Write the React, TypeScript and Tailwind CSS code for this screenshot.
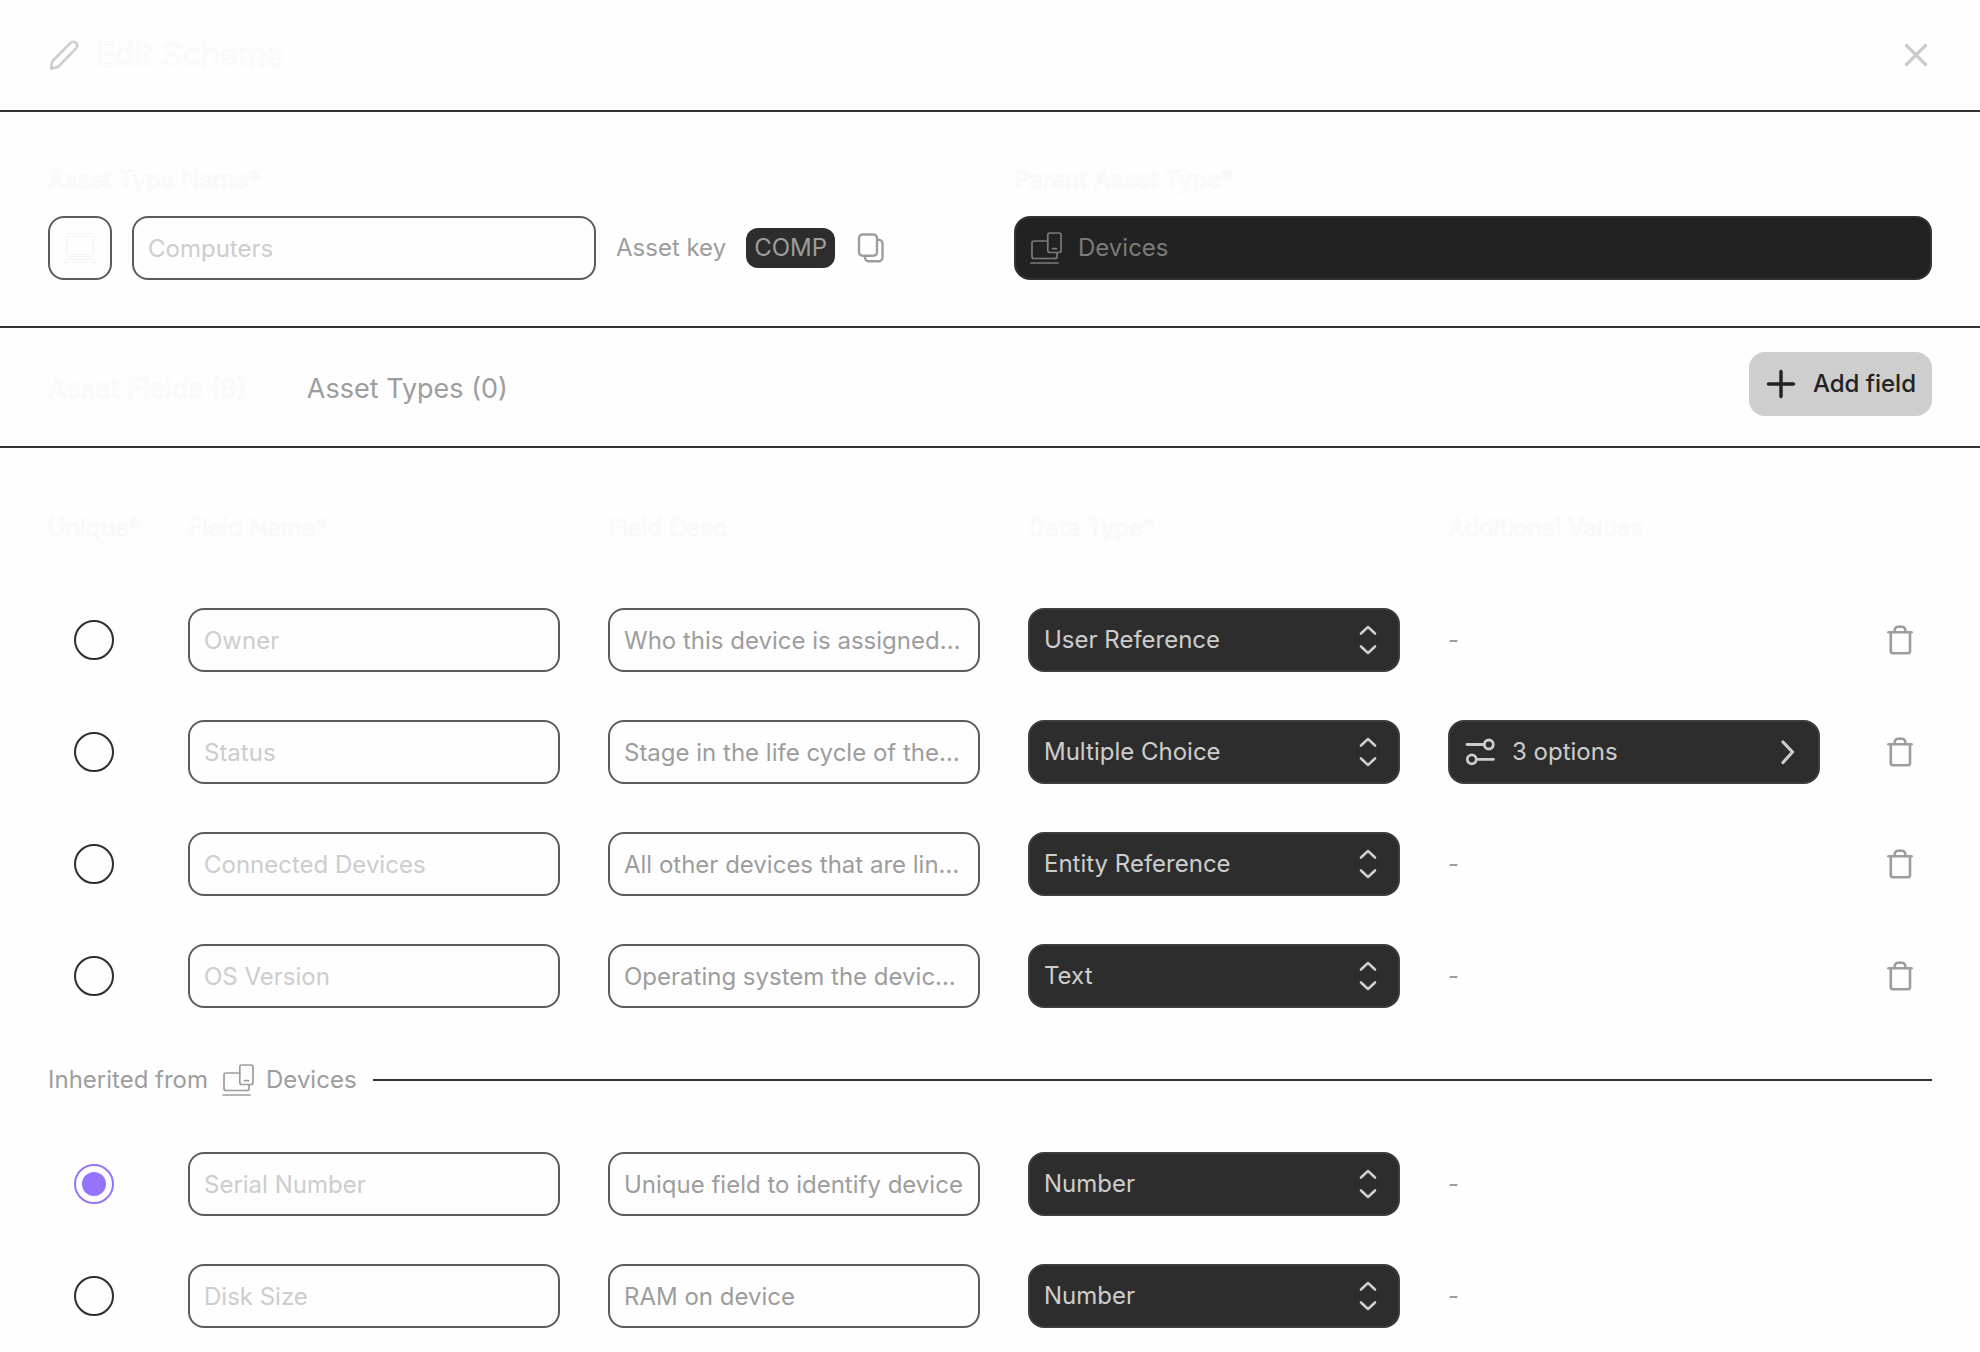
import React from 'react';

type Field = {
  name: string;
  desc: string;
  type: string;
  options?: number;
  unique?: boolean;
};

const ownFields: Field[] = [
  { name: 'Owner', desc: 'Who this device is assigned…', type: 'User Reference' },
  { name: 'Status', desc: 'Stage in the life cycle of the…', type: 'Multiple Choice', options: 3 },
  { name: 'Connected Devices', desc: 'All other devices that are lin…', type: 'Entity Reference' },
  { name: 'OS Version', desc: 'Operating system the devic…', type: 'Text' },
];

const inheritedFields: Field[] = [
  { name: 'Serial Number', desc: 'Unique field to identify device', type: 'Number', unique: true },
  { name: 'Disk Size', desc: 'RAM on device', type: 'Number' },
];

const dataTypes = ['User Reference', 'Multiple Choice', 'Entity Reference', 'Text', 'Number'];

const ghost = 'text-[#fefefe] [-webkit-text-stroke:1px_#f8f8f8]';
const rowGrid = 'grid grid-cols-[92px_repeat(4,minmax(0,1fr))_64px] items-center gap-12 px-12';
const inputBox =
  'h-16 w-full min-w-0 rounded-2xl border-2 border-[#5b5b5b] bg-transparent px-3.5 text-[24px] outline-none';

function PencilIcon() {
  return (
    <svg width="32" height="32" viewBox="0 0 32 32" fill="none" stroke="#cdcdcd" strokeWidth="2.6" strokeLinejoin="round" aria-hidden="true">
      <path d="M3 29.500 L4.200 22.500 L22.800 3.700 a3.900 3.900 0 0 1 5.500 5.500 L10 28 Z" />
      <path d="M2.500 30 L3.200 26 L6.500 29.300 Z" fill="#cdcdcd" strokeWidth="1" />
    </svg>
  );
}

function CloseIcon() {
  return (
    <svg width="32" height="32" viewBox="0 0 32 32" fill="none" stroke="#cdcdcd" strokeWidth="3.4" strokeLinecap="round" aria-hidden="true">
      <path d="M6.500 6.500 L25.500 25.500 M25.500 6.500 L6.500 25.500" />
    </svg>
  );
}

function ComputerIcon() {
  return (
    <svg width="32" height="32" viewBox="0 0 32 32" fill="none" stroke="#f4f4f4" strokeWidth="1" aria-hidden="true">
      <rect x="1.500" y="1.500" width="29" height="23" rx="3.500" />
      <rect x="3.500" y="4.500" width="25" height="18" rx="2" />
      <path d="M0 27.500 H32 M0 30.500 H32" />
    </svg>
  );
}

function CopyIcon() {
  return (
    <svg width="32" height="32" viewBox="0 0 32 32" fill="none" stroke="#9d9d9d" strokeWidth="2.4" aria-hidden="true">
      <rect x="4" y="2.500" width="18" height="21.200" rx="3.500" />
      <path d="M22 7.800 h1.500 a4 4 0 0 1 4 4 V25.200 a4 4 0 0 1 -4 4 H14 a4 4 0 0 1 -4 -4 V24" />
    </svg>
  );
}

function DevicesIcon({ color }: { color: string }) {
  return (
    <svg className="shrink-0" width="32" height="32" viewBox="0 0 32 32" fill="none" stroke={color} strokeWidth="1.700" strokeLinecap="round" aria-hidden="true">
      <path d="M17.500 9 H4 a2 2 0 0 0 -2 2 V24.500 a2 2 0 0 0 2 2 H25 a2 2 0 0 0 2 -2 V21" />
      <rect x="17.800" y="1" width="13.200" height="19.500" rx="2" />
      <path d="M22.500 16.700 H26.500 M1 31 H28" />
    </svg>
  );
}

function PlusIcon() {
  return (
    <svg width="32" height="32" viewBox="0 0 32 32" fill="none" stroke="#222222" strokeWidth="3.400" strokeLinecap="round" aria-hidden="true">
      <path d="M16 3.500 V28.500 M3.500 16 H28.500" />
    </svg>
  );
}

function UpDownIcon() {
  return (
    <svg className="pointer-events-none absolute top-4 right-4" width="32" height="32" viewBox="0 0 32 32" fill="none" stroke="#cdcdcd" strokeWidth="2.600" strokeLinecap="round" strokeLinejoin="round" aria-hidden="true">
      <path d="M9 9.500 L16 3 L23 9.500 M9 22.500 L16 29 L23 22.500" />
    </svg>
  );
}

function SlidersIcon() {
  return (
    <svg width="32" height="32" viewBox="0 0 32 32" fill="none" stroke="#cdcdcd" strokeWidth="2.800" strokeLinecap="round" aria-hidden="true">
      <path d="M3 8.500 H20 M14 23.300 H29.500" />
      <circle cx="24.800" cy="8.500" r="4.500" />
      <circle cx="7.800" cy="23.300" r="4.500" />
    </svg>
  );
}

function ChevronRightIcon() {
  return (
    <svg width="32" height="32" viewBox="0 0 32 32" fill="none" stroke="#cdcdcd" strokeWidth="3.200" strokeLinecap="round" strokeLinejoin="round" aria-hidden="true">
      <path d="M11 6 L20.500 16 L11 26.500" />
    </svg>
  );
}

function TrashIcon() {
  return (
    <svg width="32" height="32" viewBox="0 0 32 32" fill="none" stroke="#9d9d9d" strokeWidth="2.600" strokeLinecap="round" aria-hidden="true">
      <path d="M4.500 8.300 H27.500" />
      <path d="M10.700 8 V6 a3.300 3.300 0 0 1 3.300 -3.300 h4 a3.300 3.300 0 0 1 3.300 3.300 V8" />
      <path d="M6.800 8.500 V27 a2.200 2.200 0 0 0 2.200 2.200 H23.800 a2.200 2.200 0 0 0 2.200 -2.200 V8.500" />
    </svg>
  );
}

function FieldRow({ field, removable }: { field: Field; removable?: boolean }) {
  return (
    <tr className={`${rowGrid} py-6`}>
      <td className="flex justify-center">
        <input
          type="radio"
          name="unique"
          aria-label={`${field.name} is unique`}
          defaultChecked={field.unique}
          className="size-10 appearance-none rounded-full border-2 border-[#2d2d2d] checked:border-[#9673ff] checked:bg-[#9673ff] checked:bg-clip-content checked:p-1.5"
        />
      </td>
      <td>
        <input aria-label="Field Name" defaultValue={field.name} className={`${inputBox} text-[#cdcdcd]`} />
      </td>
      <td>
        <input aria-label="Field Desc" defaultValue={field.desc} className={`${inputBox} text-[#9d9d9d]`} />
      </td>
      <td className="relative">
        <select
          aria-label="Data Type"
          defaultValue={field.type}
          className="block h-16 w-full appearance-none rounded-2xl border-2 border-[#3f3f3f] bg-[#2d2d2d] pr-14 pl-3.5 text-[24px] text-[#cdcdcd]"
        >
          {dataTypes.map((t) => (
            <option key={t}>{t}</option>
          ))}
        </select>
        <UpDownIcon />
      </td>
      <td className="text-[24px] text-[#9d9d9d]">
        {field.options ? (
          <button
            type="button"
            className="flex h-16 w-full items-center gap-4 rounded-2xl border-2 border-[#3f3f3f] bg-[#2d2d2d] px-3.5 text-left text-[#cdcdcd]"
          >
            <SlidersIcon />
            <span className="flex-1">{field.options} options</span>
            <ChevronRightIcon />
          </button>
        ) : (
          '-'
        )}
      </td>
      <td className="flex justify-center">
        {removable && (
          <button type="button" aria-label={`Delete ${field.name}`}>
            <TrashIcon />
          </button>
        )}
      </td>
    </tr>
  );
}

export default function App() {
  return (
    <main className="min-h-screen w-full bg-[#fefefe] font-['Inter',sans-serif] text-[24px] leading-8 whitespace-nowrap">
      <header className="flex h-28 items-center gap-4 border-b-2 border-[#333333] px-12">
        <PencilIcon />
        <h1 className={`${ghost} flex-1 text-[32px]`}>Edit Schema</h1>
        <button type="button" aria-label="Close">
          <CloseIcon />
        </button>
      </header>

      <section className="grid grid-cols-2 gap-12 border-b-2 border-[#333333] px-12 pt-[52px] pb-[46px]">
        <div>
          <label htmlFor="asset-name" className={`${ghost} block`}>
            Asset Type Name*
          </label>
          <div className="mt-5 flex items-center gap-5">
            <button
              type="button"
              aria-label="Choose icon"
              className="flex size-16 shrink-0 items-center justify-center rounded-2xl border-2 border-[#5b5b5b]"
            >
              <ComputerIcon />
            </button>
            <div className="w-[464px]">
              <input id="asset-name" defaultValue="Computers" className={`${inputBox} block text-[#cdcdcd]`} />
            </div>
            <span className="text-[#9d9d9d]">Asset key</span>
            <span className="flex h-10 items-center rounded-xl bg-[#2d2d2d] px-2 text-[#9d9d9d]">COMP</span>
            <button type="button" aria-label="Copy asset key">
              <CopyIcon />
            </button>
          </div>
        </div>
        <div>
          <label htmlFor="parent-type" className={`${ghost} block`}>
            Parent Asset Type*
          </label>
          <div className="mt-5 flex h-16 items-center gap-4 rounded-2xl border-2 border-[#333333] bg-[#222222] px-3.5">
            <DevicesIcon color="#7b7b7b" />
            <select id="parent-type" disabled className="flex-1 appearance-none bg-transparent text-[#7b7b7b] opacity-100">
              <option>Devices</option>
            </select>
          </div>
        </div>
      </section>

      <section className="flex h-[120px] items-start justify-between border-b-2 border-[#333333] px-12 pt-6">
        <div role="tablist" className="flex gap-[60px] pt-[21px] text-[27px]">
          <button type="button" role="tab" aria-selected="true" className={ghost}>
            Asset Fields (8)
          </button>
          <button type="button" role="tab" aria-selected="false" className="text-[#9d9d9d]">
            Asset Types (0)
          </button>
        </div>
        <button
          type="button"
          className="flex h-16 items-center gap-4 rounded-2xl bg-[#cecece] px-4 font-medium text-[#222222]"
        >
          <PlusIcon />
          Add field
        </button>
      </section>

      <table className="block w-full">
        <thead className="block">
          <tr className={`${rowGrid} pt-16 pb-10 text-left`}>
            <th className={`${ghost} font-normal`}>Unique*</th>
            <th className={`${ghost} font-normal`}>Field Name*</th>
            <th className={`${ghost} font-normal`}>Field Desc</th>
            <th className={`${ghost} font-normal`}>Data Type*</th>
            <th className={`${ghost} font-normal`}>Additional Values</th>
            <td />
          </tr>
        </thead>
        <tbody className="block">
          {ownFields.map((f) => (
            <FieldRow key={f.name} field={f} removable />
          ))}
          <tr className="block px-12">
            <td className="flex h-24 items-center text-[#9d9d9d]">
              <span>Inherited from</span>
              <span className="mr-4 ml-3.5 flex items-center gap-3">
                <DevicesIcon color="#9d9d9d" />
                Devices
              </span>
              <span className="h-0.5 flex-1 bg-[#333333]" />
            </td>
          </tr>
          {inheritedFields.map((f) => (
            <FieldRow key={f.name} field={f} />
          ))}
        </tbody>
      </table>
    </main>
  );
}
